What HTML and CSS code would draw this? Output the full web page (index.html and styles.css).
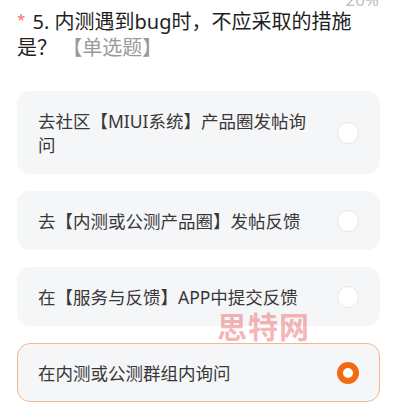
FILE: index.html
```html
<!DOCTYPE html>
<html lang="zh-CN">
<head>
<meta charset="utf-8">
<link rel="stylesheet" href="styles.css">
</head>
<body>
<div class="page">
  <div class="progress">20%</div>
  <h1 class="question"><span class="req">*</span> 5. 内测遇到bug时，不应采取的措施是？ <span class="type">【单选题】</span></h1>
  <div class="options">
    <div class="option"><div class="label">去社区【MIUI系统】产品圈发帖询问</div><span class="radio"></span></div>
    <div class="option"><div class="label">去【内测或公测产品圈】发帖反馈</div><span class="radio"></span></div>
    <div class="option"><div class="label">在【服务与反馈】APP中提交反馈</div><span class="radio"></span></div>
    <div class="option selected"><div class="label">在内测或公测群组内询问</div><span class="radio"></span></div>
  </div>
  <div class="watermark">思特网</div>
</div>
</body>
</html>
```
FILE: styles.css
```css
* { box-sizing: border-box; }
html, body { margin: 0; padding: 0; background: #ffffff; }
body {
  font-family: "Noto Sans", "Noto Sans CJK SC", sans-serif;
  color: #222;
  overflow: hidden;
}
.page {
  position: relative;
  width: 393px;
  height: 419px;
  padding: 9px 13px 0 17px;
}
.progress {
  position: absolute;
  top: -12px;
  right: 14px;
  font-size: 17px;
  color: #bdbdbd;
}
.question {
  margin: 0;
  font-size: 20px;
  font-weight: 400;
  line-height: 26px;
  color: #1e1e1e;
}
.req {
  color: #f27070;
  font-size: 15px;
  line-height: 20px;
  vertical-align: top;
  margin-right: 2px;
}
.type { color: #9a9a9a; }
.options {
  margin-top: 30px;
  display: flex;
  flex-direction: column;
  gap: 17px;
}
.option {
  display: flex;
  align-items: center;
  background: #f5f6f8;
  border: 1px solid transparent;
  border-radius: 13px;
  padding: 16.5px 20px;
}
.option .label {
  flex: 1;
  font-size: 17.5px;
  line-height: 24px;
  color: #383838;
  margin-right: 22px;
}
.radio {
  flex: none;
  width: 22px;
  height: 22px;
  border-radius: 50%;
  background: #ffffff;
  border: 1px solid #e6e6e8;
}
.option.selected {
  border-color: #f3b88e;
}
.option.selected .radio {
  border: 6.5px solid #f26b12;
  background: #ffffff;
}
.watermark {
  position: absolute;
  left: 217px;
  top: 311px;
  font-size: 30px;
  font-weight: 700;
  letter-spacing: 1px;
  color: rgba(236, 100, 100, 0.48);
  line-height: 32px;
  pointer-events: none;
}
```
